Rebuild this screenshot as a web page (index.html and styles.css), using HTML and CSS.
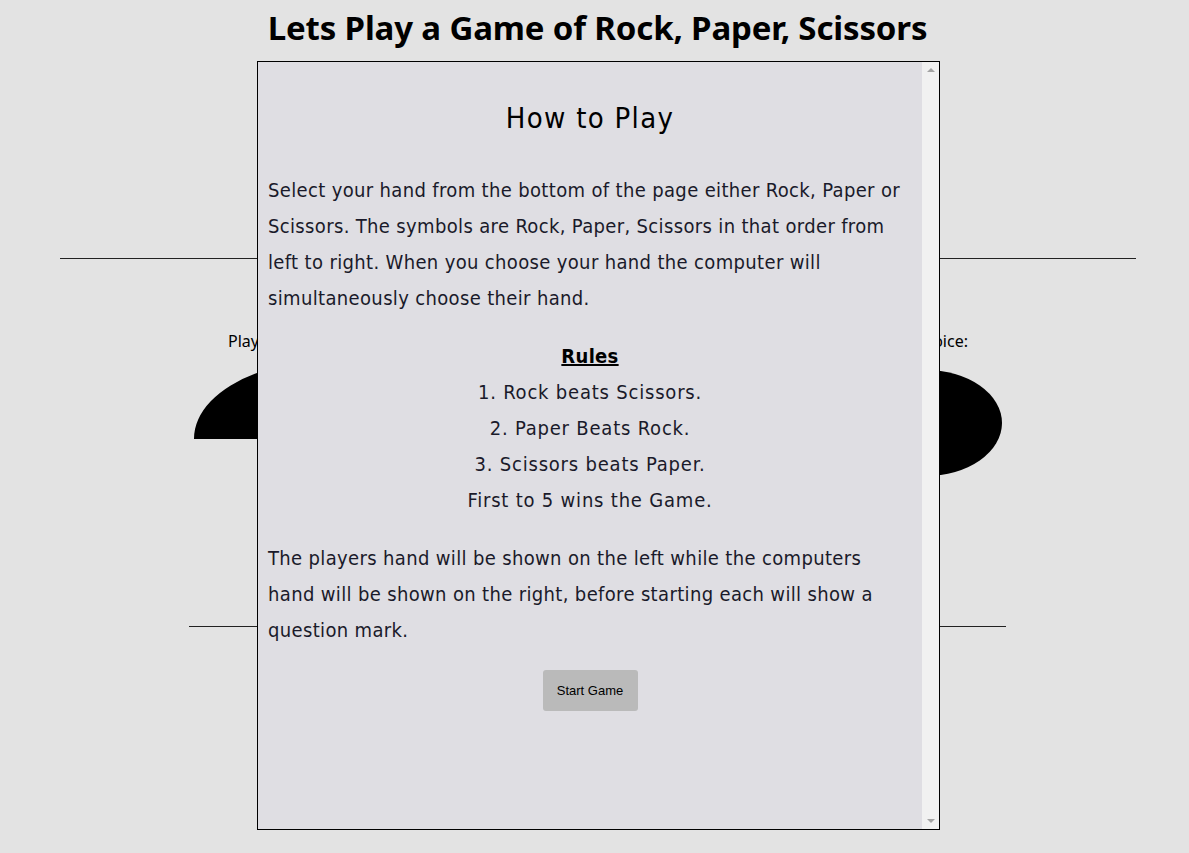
FILE: index.html
```html
<!DOCTYPE html>
<html lang="en">
<head>
<meta charset="utf-8">
<title>Rock, Paper, Scissors</title>
<link rel="stylesheet" href="styles.css">
</head>
<body>
<main class="page">
  <h1 class="title">Lets Play a Game of Rock, Paper, Scissors</h1>
  <div class="scoreboard"></div>
  <hr class="rule-top">
  <section class="arena">
    <div class="side side-player">
      <p class="label">Player choice:</p>
      <svg class="hand hand-left" width="200" height="67" viewBox="0 0 200 67"><path d="M0 67 A136 78 0 0 1 63 1 L63 0 L200 0 L200 67 Z" fill="#000"/></svg>
    </div>
    <div class="side side-computer">
      <p class="label">Computer choice:</p>
      <svg class="hand hand-right" width="200" height="106" viewBox="0 0 200 106"><ellipse cx="62" cy="52" rx="76" ry="53" fill="#000"/></svg>
    </div>
  </section>
  <hr class="rule-bottom">
</main>

<div class="modal">
  <div class="modal-body">
    <h2 class="modal-title">How to Play</h2>
    <p class="text">Select your hand from the bottom of the page either Rock, Paper or Scissors. The symbols are Rock, Paper, Scissors in that order from left to right. When you choose your hand the computer will simultaneously choose their hand.</p>
    <div class="rules">
      <h3 class="rules-title">Rules</h3>
      <p>1. Rock beats Scissors.</p>
      <p>2. Paper Beats Rock.</p>
      <p>3. Scissors beats Paper.</p>
      <p>First to 5 wins the Game.</p>
    </div>
    <p class="text">The players hand will be shown on the left while the computers hand will be shown on the right, before starting each will show a question mark.</p>
    <div class="actions"><button class="start" type="button">Start Game</button></div>
  </div>
  <div class="scrollbar">
    <span class="arrow arrow-up"></span>
    <span class="arrow arrow-down"></span>
  </div>
</div>
</body>
</html>
```
FILE: styles.css
```css
html, body {
  margin: 0;
  padding: 0;
  background: #e3e3e3;
}
body {
  font-family: "Noto Sans", "DejaVu Sans", sans-serif;
  color: #000;
}
.page {
  width: 1189px;
  height: 853px;
  overflow: hidden;
}
.title {
  margin: 0;
  padding: 6px 0 0 6px;
  text-align: center;
  font-family: "Noto Sans", sans-serif;
  font-weight: 700;
  font-size: 33px;
  line-height: 44px;
  letter-spacing: -0.15px;
}
.scoreboard {
  height: 208px;
}
hr {
  border: 0;
  border-top: 1px solid #222;
  margin: 0;
}
.rule-top {
  width: 1076px;
  margin-left: 60px;
}
.arena {
  display: flex;
  justify-content: space-between;
  padding: 72px 187px 0 194px;
  height: 367px;
  box-sizing: border-box;
}
.side {
  display: flex;
  flex-direction: column;
}
.side-computer {
  align-items: flex-end;
}
.label {
  margin: 0 0 21px 34px;
  font-size: 16px;
  line-height: 20px;
}
.side-computer .label {
  margin: 0 34px 20px 0;
}
.hand {
  display: block;
}
.hand-right {
  margin-right: -62px;
}
.rule-bottom {
  width: 817px;
  margin-left: 189px;
}

.modal {
  position: absolute;
  left: 257px;
  top: 61px;
  width: 681px;
  height: 767px;
  border: 1px solid #000;
  background: #dfdee3;
  display: flex;
}
.modal-body {
  flex: 1;
  padding: 0 10px;
  font-family: "DejaVu Sans Condensed", "DejaVu Sans", sans-serif;
  color: #1a1a2a;
}
.modal-title {
  margin: 36px 0 0;
  text-align: center;
  font-weight: 400;
  font-size: 29px;
  line-height: 40px;
  letter-spacing: 1.3px;
  color: #000;
}
.text {
  margin: 34px 0 0;
  font-size: 20px;
  line-height: 36px;
  letter-spacing: 0.35px;
}
.rules {
  margin-top: 22px;
  text-align: center;
  font-size: 20px;
  line-height: 36px;
  letter-spacing: 0.8px;
}
.rules p {
  margin: 0;
}
.rules-title {
  margin: 0;
  font-size: 20px;
  font-weight: 700;
  line-height: 36px;
  letter-spacing: 0.3px;
  text-decoration: underline;
  color: #000;
}
.rules + .text {
  margin-top: 22px;
}
.actions {
  margin-top: 22px;
  text-align: center;
}
.start {
  width: 95px;
  height: 41px;
  border: 0;
  border-radius: 3px;
  background: #bababa;
  font-family: "Liberation Sans", Arial, sans-serif;
  font-size: 13px;
  color: #000;
  padding: 0;
}
.scrollbar {
  width: 17px;
  background: #f1f1f1;
  position: relative;
}
.arrow {
  position: absolute;
  left: 5px;
  width: 0;
  height: 0;
  border-left: 4px solid transparent;
  border-right: 4px solid transparent;
}
.arrow-up {
  top: 6px;
  border-bottom: 4px solid #a3a3a3;
}
.arrow-down {
  bottom: 6px;
  border-top: 4px solid #a3a3a3;
}
```
